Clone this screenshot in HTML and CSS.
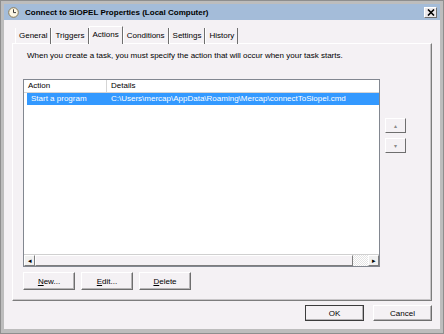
FILE: index.html
```html
<!DOCTYPE html>
<html lang="en">
  <head>
    <meta charset="UTF-8" />
    <title>Connect to SIOPEL Properties (Local Computer)</title>
    <link rel="stylesheet" href="styles.css">
  </head>
  <body>
    <div class="window">
      <div class="titlebar">
        <svg class="title-icon" width="11" height="11" viewBox="0 0 11 11">
          <circle cx="5.5" cy="5.5" r="4.8" fill="#fbf6e4" stroke="#8a7a55" stroke-width="1"/>
          <path d="M5.5 2.3 V5.6 H8" fill="none" stroke="#3b3b3b" stroke-width="1"/>
        </svg>
        <span class="title-text">Connect to SIOPEL Properties (Local Computer)</span>
        <button class="close-btn" type="button">
          <svg width="8" height="7" viewBox="0 0 8 7">
            <path d="M1 0.5 L7 6.5 M7 0.5 L1 6.5" stroke="#000" stroke-width="1.6"/>
          </svg>
        </button>
      </div>

      <div class="content">
        <div class="tabs">
          <div class="tab">General</div>
          <div class="tab">Triggers</div>
          <div class="tab active">Actions</div>
          <div class="tab">Conditions</div>
          <div class="tab">Settings</div>
          <div class="tab">History</div>
        </div>

        <div class="panel">
          <p class="intro">When you create a task, you must specify the action that will occur when your task starts.</p>

          <div class="list-row">
            <div class="listview">
              <div class="lv-header">
                <div class="col col-action">Action</div>
                <div class="col col-details">Details</div>
              </div>
              <div class="lv-body">
                <div class="lv-item selected">
                  <div class="col col-action">Start a program</div>
                  <div class="col col-details">C:\Users\mercap\AppData\Roaming\Mercap\connectToSiopel.cmd</div>
                </div>
              </div>
              <div class="hscroll">
                <div class="sb-btn">&#9666;</div>
                <div class="sb-thumb"></div>
                <div class="sb-track"></div>
                <div class="sb-btn">&#9656;</div>
              </div>
            </div>

            <div class="move-btns">
              <button class="move-btn" type="button">&#9652;</button>
              <button class="move-btn" type="button">&#9662;</button>
            </div>
          </div>

          <div class="action-btns">
            <button class="btn" type="button"><u>N</u>ew...</button>
            <button class="btn" type="button"><u>E</u>dit...</button>
            <button class="btn" type="button"><u>D</u>elete</button>
          </div>
        </div>

        <div class="footer">
          <button class="btn btn-dialog default" type="button">OK</button>
          <button class="btn btn-dialog" type="button">Cancel</button>
        </div>
      </div>
    </div>
  </body>
</html>
```

FILE: styles.css
```css
body {
  margin: 0;
  font-family: "Liberation Sans", Arial, sans-serif;
  font-size: 8px;
  color: #000000;
  background-color: #f4f1f4;
}

.window {
  width: 444px;
  height: 334px;
  box-sizing: border-box;
  border: 4px solid #bdbdbd;
  border-bottom-width: 5px;
  outline: 1px solid #8e8e8e;
  outline-offset: -1px;
  background-color: #f4f1f4;
  display: flex;
  flex-direction: column;
}

.titlebar {
  height: 16px;
  background-color: #a4bcd9;
  display: flex;
  align-items: center;
  padding: 0 3px 0 4px;
}

.title-icon {
  margin-right: 6px;
}

.title-text {
  font-weight: bold;
  font-size: 8px;
  flex: 1;
}

.close-btn {
  width: 13px;
  height: 11px;
  padding: 0;
  border: 1px solid;
  border-color: #ffffff #6e6e6e #6e6e6e #ffffff;
  background-color: #ece9ec;
  display: flex;
  align-items: center;
  justify-content: center;
}

.content {
  flex: 1;
  display: flex;
  flex-direction: column;
  padding: 6px 8px 0 8px;
}

.tabs {
  display: flex;
  align-items: flex-end;
  height: 18px;
  margin-left: 3px;
  position: relative;
  z-index: 1;
  margin-bottom: -1px;
}

.tab {
  height: 16px;
  line-height: 16px;
  padding: 0 3px;
  border-left: 1px solid #ffffff;
  border-right: 1px solid #6e6e6e;
  box-sizing: border-box;
}

.tab.active {
  height: 18px;
  line-height: 15px;
  border-top: 1px solid #ffffff;
  background-color: #f4f1f4;
}

.panel {
  height: 258px;
  box-sizing: border-box;
  border: 1px solid;
  border-color: #ffffff #7d7d7d #7d7d7d #ffffff;
  box-shadow: inset -1px -1px 0 #c8c6c8;
  padding: 6px 0 0 10px;
  display: flex;
  flex-direction: column;
}

.intro {
  margin: 0 0 0 4px;
  line-height: 12px;
}

.list-row {
  display: flex;
  margin-top: 17px;
}

.listview {
  width: 357px;
  height: 188px;
  box-sizing: border-box;
  border: 1px solid #828790;
  background-color: #ffffff;
  display: flex;
  flex-direction: column;
}

.lv-header {
  display: flex;
  height: 12px;
  line-height: 12px;
  border-bottom: 1px solid #d5d5d5;
}

.lv-header .col-action {
  border-right: 1px solid #d5d5d5;
}

.col {
  padding-left: 4px;
  box-sizing: border-box;
  white-space: nowrap;
}

.col-action {
  width: 83px;
}

.lv-body {
  flex: 1;
  padding-left: 3px;
}

.lv-item {
  display: flex;
  height: 12px;
  line-height: 12px;
}

.lv-item .col-action {
  width: 80px;
}

.lv-item.selected {
  background-color: #3399ff;
  color: #ffffff;
}

.hscroll {
  display: flex;
  height: 11px;
  border-top: 1px solid #d0d0d0;
}

.sb-btn {
  width: 11px;
  box-sizing: border-box;
  border: 1px solid;
  border-color: #ffffff #7d7d7d #7d7d7d #ffffff;
  background-color: #f0f0f0;
  font-size: 7px;
  line-height: 9px;
  text-align: center;
}

.sb-thumb {
  width: 318px;
  box-sizing: border-box;
  border: 1px solid;
  border-color: #ffffff #7d7d7d #7d7d7d #ffffff;
  background-color: #f4f1f4;
}

.sb-track {
  flex: 1;
  background-image: repeating-conic-gradient(#ffffff 0 25%, #e4e4e4 0 50%);
  background-size: 2px 2px;
}

.move-btns {
  display: flex;
  flex-direction: column;
  gap: 5px;
  margin: 39px 0 0 5px;
}

.move-btn {
  width: 21px;
  height: 15px;
  padding: 0;
  font-size: 6px;
  color: #8a8a8a;
  border: 1px solid;
  border-color: #ffffff #6e6e6e #6e6e6e #ffffff;
  background-color: #f4f1f4;
}

.action-btns {
  display: flex;
  gap: 6px;
  margin-top: 5px;
}

.btn {
  width: 52px;
  height: 18px;
  padding: 0;
  font-family: inherit;
  font-size: 8px;
  color: #000000;
  background-color: #f4f1f4;
  border: 1px solid;
  border-color: #ffffff #6e6e6e #6e6e6e #ffffff;
  box-shadow: inset -1px -1px 0 #b5b3b5;
}

.footer {
  display: flex;
  justify-content: flex-end;
  gap: 9px;
  margin-top: 4px;
}

.btn-dialog {
  width: 59px;
  height: 16px;
}

.btn-dialog.default {
  outline: 1px solid #3c3c3c;
  outline-offset: -1px;
}
```
